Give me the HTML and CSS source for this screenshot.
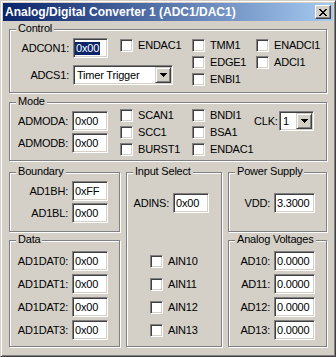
FILE: index.html
```html
<!DOCTYPE html>
<html lang="en">
<head>
    <meta charset="UTF-8">
    <title>Analog/Digital Converter 1 (ADC1/DAC1)</title>
    <link rel="stylesheet" href="styles.css">
</head>
<body>
    <div class="window">
        <div class="titlebar">
            <span class="title">Analog/Digital Converter 1 (ADC1/DAC1)</span>
            <span class="close-btn">
                <svg width="8" height="7" viewBox="0 0 8 7" shape-rendering="crispEdges">
                    <path d="M0 0h2v1h-2z M6 0h2v1h-2z M1 1h2v1h-2z M5 1h2v1h-2z M2 2h4v1h-4z M3 3h2v1h-2z M2 4h4v1h-4z M1 5h2v1h-2z M5 5h2v1h-2z M0 6h2v1h-2z M6 6h2v1h-2z" fill="#000"/>
                </svg>
            </span>
        </div>

        <div class="client">
            <!-- Control -->
            <div class="group control">
                <span class="caption">Control</span>
                <div class="ctl-left">
                    <div class="row">
                        <span class="lbl lbl-ctl">ADCON1:</span>
                        <span class="edit edit-ctl"><span class="sel">0x00</span></span>
                        <span class="check endac"><span class="box"></span>ENDAC1</span>
                    </div>
                    <div class="row">
                        <span class="lbl lbl-ctl">ADCS1:</span>
                        <span class="combo combo-wide">
                            <span class="combo-text">Timer Trigger</span>
                            <span class="combo-btn"><svg width="7" height="4" viewBox="0 0 7 4" shape-rendering="crispEdges"><path d="M0 0h7v1h-7z M1 1h5v1h-5z M2 2h3v1h-3z M3 3h1v1h-1z" fill="#000"/></svg></span>
                        </span>
                    </div>
                </div>
                <div class="check-col ctl-col2">
                    <span class="check"><span class="box"></span>TMM1</span>
                    <span class="check"><span class="box"></span>EDGE1</span>
                    <span class="check"><span class="box"></span>ENBI1</span>
                </div>
                <div class="check-col">
                    <span class="check"><span class="box"></span>ENADCI1</span>
                    <span class="check"><span class="box"></span>ADCI1</span>
                </div>
            </div>

            <!-- Mode -->
            <div class="group mode">
                <span class="caption">Mode</span>
                <div class="fields mode-fields">
                    <div class="row">
                        <span class="lbl lbl-std">ADMODA:</span>
                        <span class="edit edit-std">0x00</span>
                    </div>
                    <div class="row">
                        <span class="lbl lbl-std">ADMODB:</span>
                        <span class="edit edit-std">0x00</span>
                    </div>
                </div>
                <div class="check-col mode-col1">
                    <span class="check"><span class="box"></span>SCAN1</span>
                    <span class="check"><span class="box"></span>SCC1</span>
                    <span class="check"><span class="box"></span>BURST1</span>
                </div>
                <div class="check-col mode-col2">
                    <span class="check"><span class="box"></span>BNDI1</span>
                    <span class="check"><span class="box"></span>BSA1</span>
                    <span class="check"><span class="box"></span>ENDAC1</span>
                </div>
                <div class="row clk">
                    <span class="lbl lbl-clk">CLK:</span>
                    <span class="combo combo-clk">
                        <span class="combo-text">1</span>
                        <span class="combo-btn"><svg width="7" height="4" viewBox="0 0 7 4" shape-rendering="crispEdges"><path d="M0 0h7v1h-7z M1 1h5v1h-5z M2 2h3v1h-3z M3 3h1v1h-1z" fill="#000"/></svg></span>
                    </span>
                </div>
            </div>

            <div class="columns">
                <div class="col">
                    <div class="group boundary">
                        <span class="caption">Boundary</span>
                        <div class="fields">
                            <div class="row"><span class="lbl lbl-std">AD1BH:</span><span class="edit edit-std">0xFF</span></div>
                            <div class="row"><span class="lbl lbl-std">AD1BL:</span><span class="edit edit-std">0x00</span></div>
                        </div>
                    </div>
                    <div class="group data">
                        <span class="caption">Data</span>
                        <div class="fields rows4">
                            <div class="row"><span class="lbl lbl-std">AD1DAT0:</span><span class="edit edit-std">0x00</span></div>
                            <div class="row"><span class="lbl lbl-std">AD1DAT1:</span><span class="edit edit-std">0x00</span></div>
                            <div class="row"><span class="lbl lbl-std">AD1DAT2:</span><span class="edit edit-std">0x00</span></div>
                            <div class="row"><span class="lbl lbl-std">AD1DAT3:</span><span class="edit edit-std">0x00</span></div>
                        </div>
                    </div>
                </div>

                <div class="group input-select">
                    <span class="caption">Input Select</span>
                    <div class="row"><span class="lbl lbl-adins">ADINS:</span><span class="edit edit-std">0x00</span></div>
                    <div class="fields rows4 ain">
                        <div class="row"><span class="check"><span class="box"></span>AIN10</span></div>
                        <div class="row"><span class="check"><span class="box"></span>AIN11</span></div>
                        <div class="row"><span class="check"><span class="box"></span>AIN12</span></div>
                        <div class="row"><span class="check"><span class="box"></span>AIN13</span></div>
                    </div>
                </div>

                <div class="col">
                    <div class="group power">
                        <span class="caption">Power Supply</span>
                        <div class="row"><span class="lbl lbl-volt">VDD:</span><span class="edit edit-volt">3.3000</span></div>
                    </div>
                    <div class="group analog">
                        <span class="caption">Analog Voltages</span>
                        <div class="fields rows4">
                            <div class="row"><span class="lbl lbl-volt">AD10:</span><span class="edit edit-volt">0.0000</span></div>
                            <div class="row"><span class="lbl lbl-volt">AD11:</span><span class="edit edit-volt">0.0000</span></div>
                            <div class="row"><span class="lbl lbl-volt">AD12:</span><span class="edit edit-volt">0.0000</span></div>
                            <div class="row"><span class="lbl lbl-volt">AD13:</span><span class="edit edit-volt">0.0000</span></div>
                        </div>
                    </div>
                </div>
            </div>
        </div>
    </div>
</body>
</html>
```

FILE: styles.css
```css
:root {
    --face: #D4D0C8;
    --shadow: #808080;
    --dark: #404040;
    --light: #ffffff;
}

* {
    box-sizing: border-box;
    margin: 0;
    padding: 0;
}

body {
    background: var(--face);
    font-family: "Liberation Sans", Arial, sans-serif;
    font-size: 11px;
    letter-spacing: -0.2px;
    color: #000;
}

.window {
    width: 336px;
    height: 357px;
    padding: 2px;
    background: var(--face);
    border: 1px solid;
    border-color: var(--face) var(--dark) var(--dark) var(--face);
    box-shadow: inset 1px 1px 0 var(--light), inset -1px -1px 0 var(--shadow);
}

.titlebar {
    height: 18px;
    display: flex;
    align-items: center;
    justify-content: space-between;
    padding: 0 2px;
    background: linear-gradient(to right, #0A246A, #A6CAF0);
    color: #fff;
    font-weight: bold;
    font-size: 12px;
    letter-spacing: 0;
}

.close-btn {
    width: 16px;
    height: 14px;
    display: flex;
    align-items: center;
    justify-content: center;
    background: var(--face);
    border: 1px solid;
    border-color: var(--light) var(--dark) var(--dark) var(--light);
    box-shadow: inset -1px -1px 0 var(--shadow);
}

.client {
    padding: 8px 6px 0;
}

/* etched group box */
.group {
    position: relative;
    border: 1px solid var(--shadow);
    box-shadow: inset 1px 1px 0 var(--light), 1px 1px 0 var(--light);
}

.caption {
    position: absolute;
    top: -8px;
    left: 6px;
    padding: 0 2px;
    line-height: 13px;
    background: var(--face);
    white-space: nowrap;
}

.row {
    display: flex;
    align-items: center;
    height: 20px;
}

.lbl {
    text-align: right;
    margin-right: 4px;
    line-height: 13px;
    white-space: nowrap;
}

.lbl-ctl { width: 59px; }
.lbl-std { width: 58px; }
.lbl-clk { width: 21px; }
.lbl-adins { width: 42px; }
.lbl-volt { width: 41px; }

.edit {
    height: 20px;
    display: flex;
    align-items: center;
    padding-left: 2px;
    background: #fff;
    border: 1px solid;
    border-color: var(--shadow) var(--light) var(--light) var(--shadow);
    box-shadow: inset 1px 1px 0 var(--dark), inset -1px -1px 0 var(--face);
    line-height: 13px;
}

.edit-ctl { width: 35px; padding-left: 1px; }
.edit-std { width: 36px; }
.edit-volt { width: 41px; }

.sel {
    background: #0A246A;
    color: #fff;
    padding: 0 1px;
}

.combo {
    height: 20px;
    display: flex;
    background: #fff;
    border: 1px solid;
    border-color: var(--shadow) var(--light) var(--light) var(--shadow);
    box-shadow: inset 1px 1px 0 var(--dark), inset -1px -1px 0 var(--face);
    padding: 1px;
}

.combo-wide { width: 100px; }
.combo-clk { width: 35px; }

.combo-text {
    flex: 1;
    display: flex;
    align-items: center;
    padding-left: 2px;
    line-height: 13px;
}

.combo-btn {
    width: 16px;
    display: flex;
    align-items: center;
    justify-content: center;
    background: var(--face);
    border: 1px solid;
    border-color: var(--face) var(--dark) var(--dark) var(--face);
    box-shadow: inset 1px 1px 0 var(--light), inset -1px -1px 0 var(--shadow);
}

.check {
    display: flex;
    align-items: center;
    gap: 5px;
    height: 17px;
    line-height: 13px;
    white-space: nowrap;
}

.box {
    width: 13px;
    height: 13px;
    flex: none;
    background: #fff;
    border: 1px solid;
    border-color: var(--shadow) var(--light) var(--light) var(--shadow);
    box-shadow: inset 1px 1px 0 var(--dark), inset -1px -1px 0 var(--face);
}

.check-col {
    display: flex;
    flex-direction: column;
}

.check-col .check {
    align-items: flex-start;
}

/* Control */
.control {
    height: 64px;
    display: flex;
    padding-top: 8px;
}

.ctl-left {
    width: 182px;
    display: flex;
    flex-direction: column;
    gap: 7px;
}

.endac {
    align-self: flex-start;
    margin: 1px 0 0 12px;
    align-items: flex-start;
}

.control .check-col {
    padding-top: 1px;
}

.ctl-col2 { width: 64px; }

/* Mode */
.mode {
    height: 59px;
    margin-top: 9px;
    display: flex;
    padding-top: 6px;
}

.fields {
    display: flex;
    flex-direction: column;
    gap: 2px;
}

.mode-fields {
    width: 98px;
    margin-top: 2px;
}

.mode-col1 {
    width: 72px;
    margin-left: 12px;
}

.mode-col2 { width: 62px; }

.clk {
    align-self: flex-start;
    margin-top: 2px;
}

/* bottom part */
.columns {
    margin-top: 11px;
    display: grid;
    grid-template-columns: 111px 96px 99px;
    gap: 6px;
}

.col {
    display: flex;
    flex-direction: column;
    gap: 8px;
}

.boundary, .power {
    height: 60px;
    padding-top: 8px;
}

.power {
    padding-top: 20px;
}

.data, .analog {
    height: 107px;
    padding-top: 10px;
}

.rows4 {
    gap: 3px;
}

.input-select {
    height: 175px;
    padding-top: 20px;
}

.ain {
    margin-top: 38px;
    padding-left: 23px;
}

.ain .check {
    height: 20px;
}
```
